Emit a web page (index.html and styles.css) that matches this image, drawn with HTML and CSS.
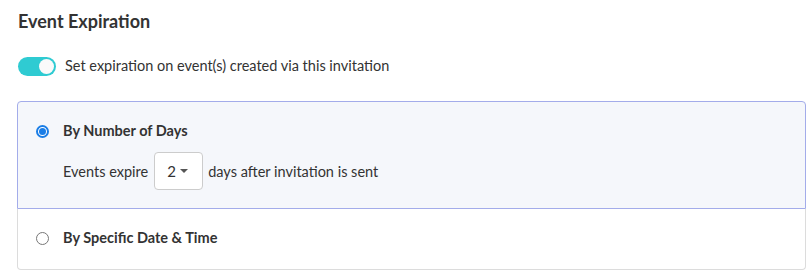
FILE: index.html
```html
<!DOCTYPE html>
<html>
<head>
<meta charset="utf-8">
<link rel="stylesheet" href="styles.css">
</head>
<body>
<div class="page">
  <h2 class="title">Event Expiration</h2>
  <div class="toggle-row">
    <span class="toggle"><span class="knob"></span></span>
    <span class="toggle-label">Set expiration on event(s) created via this invitation</span>
  </div>
  <div class="card">
    <div class="option active">
      <div class="option-head">
        <span class="radio checked"></span>
        <span class="option-label">By Number of Days</span>
      </div>
      <div class="days-row">
        <span>Events expire</span>
        <span class="select">2<span class="caret"></span></span>
        <span>days after invitation is sent</span>
      </div>
    </div>
    <div class="option">
      <div class="option-head">
        <span class="radio"></span>
        <span class="option-label">By Specific Date &amp; Time</span>
      </div>
    </div>
  </div>
</div>
</body>
</html>
```
FILE: styles.css
```css
* { box-sizing: border-box; }
html, body { margin: 0; padding: 0; background: #fff; }
body { font-family: Lato, "Open Sans", sans-serif; color: #333; }
.page { padding: 10px 6px 0 17px; }
.title { margin: 0 0 0 1px; font-size: 18px; font-weight: 700; line-height: 22px; color: #333; }
.toggle-row { display: flex; align-items: center; margin-top: 24px; margin-left: 1px; }
.toggle { width: 38px; height: 19px; border-radius: 10px; background: #2fcbd2; position: relative; }
.knob { position: absolute; right: 2px; top: 2px; width: 15px; height: 15px; border-radius: 50%; background: #fafafa; }
.toggle-label { margin-left: 9px; font-size: 14.5px; line-height: 20px; }
.card { margin-top: 25px; border-radius: 4px; }
.option { border: 1px solid #dcdcdc; border-top: none; border-radius: 0 0 4px 4px; height: 61px; padding-left: 18px; padding-top: 19px; }
.option.active { border: 1px solid #a3acea; background: #f5f7fb; border-radius: 4px 4px 0 0; height: 108px; padding-top: 19px; }
.option-head { display: flex; align-items: center; height: 20px; }
.radio { width: 13px; height: 13px; border-radius: 50%; border: 1px solid #777; background: #fff; }
.radio.checked { border: 2px solid #1a7de6; background: #fff; position: relative; }
.radio.checked::after { content: ""; position: absolute; left: 1px; top: 1px; width: 7px; height: 7px; border-radius: 50%; background: #1a7de6; }
.option-label { margin-left: 14px; font-size: 14.5px; font-weight: 700; line-height: 20px; }
.days-row { display: flex; align-items: center; margin-top: 11px; margin-left: 27px; font-size: 14.5px; }
.select { display: flex; align-items: center; justify-content: center; width: 49px; height: 38px; margin: 0 5px 0 6px; border: 1px solid #ccc; border-radius: 4px; background: #fff; font-size: 15px; padding-right: 2px; }
.caret { margin-left: 4px; width: 0; height: 0; border-left: 4px solid transparent; border-right: 4px solid transparent; border-top: 4px solid #555; }
```
